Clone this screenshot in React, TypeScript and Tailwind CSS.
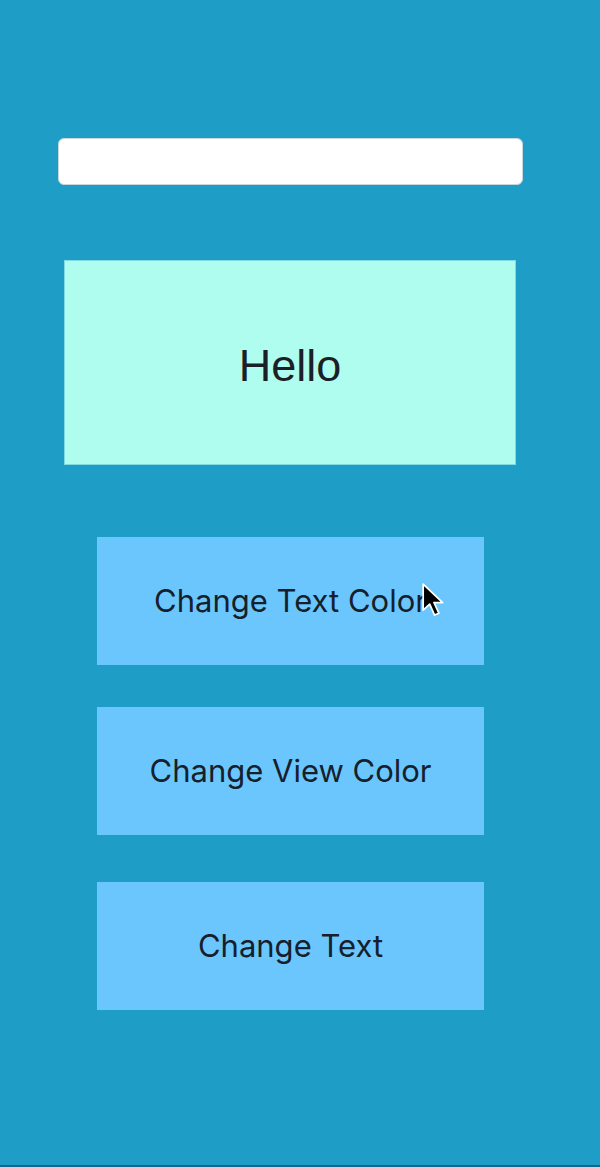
import React from "react";

export default function App() {
  return (
    <div className="w-[600px] h-[1167px] bg-[#1e9dc6] flex flex-col border-b-2 border-[#0e6a8c]" style={{ fontFamily: "Inter, 'Liberation Sans', sans-serif" }}>
      <div className="pt-[138px] pl-[58px]">
        <div className="w-[465px] h-[47px] bg-white rounded-[6px] border border-[#c9d6dd]" />
      </div>
      <div className="mt-[75px] ml-[64px] w-[452px] h-[205px] bg-[#aefdef] border border-[#7fd9e0] flex items-center justify-center pt-[6px]">
        <span className="text-[45px] leading-none text-[#1b1f27]" style={{ fontFamily: "'Liberation Sans', Arial, sans-serif" }}>Hello</span>
      </div>
      <div className="relative mt-[72px] ml-[97px] w-[387px] h-[128px] bg-[#6bc6fd] flex items-center justify-center">
        <span className="text-[31px] text-[#15202b]">Change Text Color</span>
        <svg className="absolute left-[324px] top-[46px]" width="26" height="37" viewBox="0 0 24 34">
          <path d="M2 1 L2 25 L8 19.5 L12.5 29.5 L16.5 27.8 L12 18 L20 18 Z" fill="#000" stroke="#fff" strokeWidth="1.6" strokeLinejoin="round" />
        </svg>
      </div>
      <div className="mt-[42px] ml-[97px] w-[387px] h-[128px] bg-[#6bc6fd] flex items-center justify-center">
        <span className="text-[31px] text-[#15202b]">Change View Color</span>
      </div>
      <div className="mt-[47px] ml-[97px] w-[387px] h-[128px] bg-[#6bc6fd] flex items-center justify-center">
        <span className="text-[31px] text-[#15202b]">Change Text</span>
      </div>
    </div>
  );
}
